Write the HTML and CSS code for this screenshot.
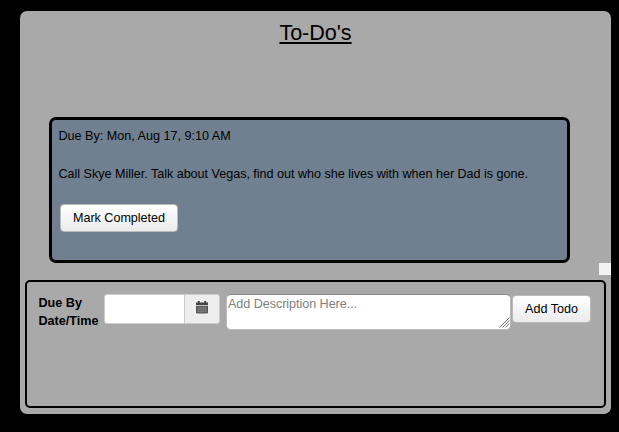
FILE: index.html
```html
<!DOCTYPE html>
<html lang="en">
<head>
<meta charset="utf-8">
<title>To-Do's</title>
<link rel="stylesheet" href="styles.css">
</head>
<body>
<main class="panel">
  <h1 class="title">To-Do's</h1>
  <section class="list">
    <article class="todo">
      <p class="due">Due By: Mon, Aug 17, 9:10 AM</p>
      <p class="description">Call Skye Miller. Talk about Vegas, find out who she lives with when her Dad is gone.</p>
      <button class="button complete">Mark Completed</button>
    </article>
  </section>
  <div class="scroll-corner"></div>
  <form class="add-form">
    <label class="label" for="due">Due By Date/Time</label>
    <div class="date-group">
      <input class="date-input" id="due" type="text">
      <span class="addon">
        <svg class="calendar" viewBox="0 0 12 13" aria-hidden="true">
          <path fill="#444" d="M0 1.5h1.8V0h2v1.5h4.4V0h2v1.5H12V4.2H0z"/>
          <path fill="#555" d="M0 5h12v6.6l-.8.8H.8l-.8-.8z"/>
          <path stroke="#999" stroke-width=".5" d="M1 6.8h10M1 8.7h10M1 10.6h10M2.8 5.5v6.2M5 5.5v6.2M7.2 5.5v6.2M9.4 5.5v6.2"/>
        </svg>
      </span>
    </div>
    <div class="text-wrap">
      <textarea class="text" placeholder="Add Description Here..."></textarea>
      <svg class="grip" viewBox="0 0 11 11" aria-hidden="true">
        <path stroke="#777" d="M0.5 10.5l10-10M3.5 10.5l7-7M6.5 10.5l4-4"/>
      </svg>
    </div>
    <button class="button add" type="button">Add Todo</button>
  </form>
</main>
</body>
</html>
```
FILE: styles.css
```css
* {
  box-sizing: border-box;
}

body {
  margin: 0;
  padding: 11px 8px 18px 20px;
  height: 432px;
  background: #000;
  color: #000;
  font: 12.6px/18px "Liberation Sans", Arial, sans-serif;
}

.panel {
  display: flex;
  flex-direction: column;
  height: 403px;
  background: #a9a9a9;
  border-radius: 7px;
}

.title {
  height: 106px;
  margin: 0;
  padding-top: 10px;
  font-size: 21.6px;
  line-height: 24px;
  font-weight: 400;
  letter-spacing: -0.05px;
  text-align: center;
  text-decoration: underline;
  text-decoration-thickness: 2px;
  text-underline-offset: 2px;
}

.list {
  padding: 0 41px 0 29px;
}

.todo {
  height: 146px;
  padding: 7px 6.5px;
  background: #708090;
  border: 3px solid #000;
  border-radius: 7px;
}

.due {
  margin: 0 0 20px;
}

.description {
  margin: 0 0 21px;
  letter-spacing: -0.025px;
  white-space: nowrap;
}

.button {
  flex: none;
  height: 28px;
  padding: 0;
  border: 1px solid #bbb;
  border-radius: 4px;
  background: linear-gradient(#fff, #ebebeb);
  color: #000;
  font: inherit;
}

.complete {
  display: block;
  width: 118px;
  margin-left: 1.5px;
  letter-spacing: -0.03px;
}

.scroll-corner {
  align-self: flex-end;
  width: 12px;
  height: 12px;
  background: #f2f2f2;
}

.add-form {
  display: flex;
  align-items: flex-start;
  height: 128px;
  margin: 5px 5px 0;
  padding: 12px 11.5px;
  border: 2px solid #000;
  border-radius: 5px;
}

.label {
  width: 65.5px;
  font-weight: 700;
}

.date-group {
  display: flex;
  width: 116px;
  height: 30px;
  margin-right: 6px;
  border: 1px solid #ccc;
  border-radius: 3px;
  background: #fff;
  overflow: hidden;
}

.date-input {
  width: 79px;
  padding: 0;
  border: 0;
  background: none;
}

.addon {
  flex: 1;
  display: flex;
  justify-content: center;
  padding-top: 6px;
  border-left: 1px solid #ccc;
  background: #eee;
}

.calendar {
  width: 12px;
  height: 13px;
}

.text-wrap {
  position: relative;
  width: 285px;
  height: 36px;
  margin-right: 1px;
}

.text {
  display: block;
  width: 100%;
  height: 100%;
  padding: 0 1px;
  border: 1px solid #bbb;
  border-top-color: #888;
  border-radius: 5px;
  background: #fff;
  font: inherit;
  letter-spacing: -0.05px;
  resize: none;
}

.text::placeholder {
  color: #808080;
}

.grip {
  position: absolute;
  right: 1px;
  bottom: 2px;
  width: 11px;
  height: 11px;
  pointer-events: none;
}

.add {
  width: 79px;
  margin-top: 1px;
}
```
